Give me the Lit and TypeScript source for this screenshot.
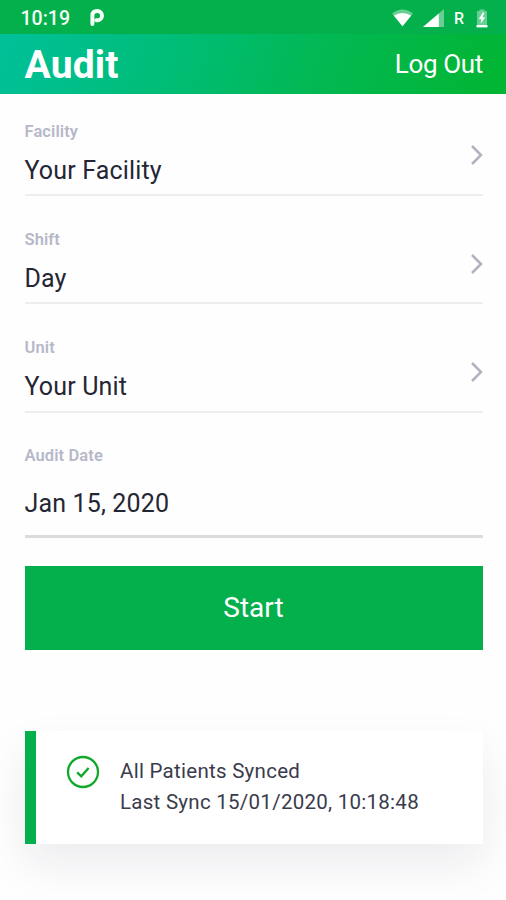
import { LitElement, html, css } from "lit";
import { customElement, property } from "lit/decorators.js";

@customElement("status-bar")
class StatusBar extends LitElement {
  static styles = css`
    :host { display: flex; align-items: center; height: 34px; box-sizing: border-box; padding: 2px 18px 0 20.5px; background: #03b04b; color: #f4fff6; }
    .time { font-size: 19.5px; font-weight: 500; width: 68.5px; line-height: 32px; padding-top: 2px; }
    .spacer { flex: 1; }
    .net { font-size: 16px; font-weight: 500; line-height: 32px; margin: 2px 12px 0 10px; }
    svg { display: block; }
    .signal { margin-left: 10px; }
  `;
  render() {
    return html`
      <span class="time">10:19</span>
      <svg width="17" height="20" viewBox="0 0 17 20" fill="none" stroke="#f4fff6" stroke-linecap="round">
        <path d="M3.4 16V7.6Q3.4 3.1 8 3.1H8.4A4.6 4.6 0 0 1 8.4 12.3H7.4" stroke-width="4" />
      </svg>
      <span class="spacer"></span>
      <svg width="21" height="18" viewBox="0 0 21 18">
        <path d="M0 4.5Q10.5-3.5 21 4.5L10.5 17.2Z" fill="#fff" opacity=".4" />
        <path d="M1.8 6.6Q10.5 1.6 19.2 6.6L10.5 17.2Z" fill="#fff" />
      </svg>
      <svg class="signal" width="21" height="18" viewBox="0 0 21 18">
        <path d="M21 0V18H0Z" fill="#fff" opacity=".4" />
        <path d="M15.8 4.5V18H0Z" fill="#fff" />
      </svg>
      <span class="net">R</span>
      <svg width="12" height="19" viewBox="0 0 12 19">
        <path d="M3.5 2V.5h5V2H11v14H1V2Z" fill="#fff" opacity=".4" />
        <path d="M6.8 3.5 2.8 10h2.6L4.6 14.8 9.2 8.2H6.5L8.5 3.5Z" fill="#fff" />
        <path d="M.5 16h11v2.4H.5Z" fill="#fff" />
      </svg>
    `;
  }
}

@customElement("form-field")
class FormField extends LitElement {
  @property() label = "";
  @property() value = "";
  @property({ type: Boolean }) picker = false;
  static styles = css`
    :host { display: flex; align-items: center; box-sizing: border-box; height: 75px; border-bottom: 2px solid #eeeef0; }
    :host(.date) { height: 92.5px; border-bottom: 3px solid #dcdcde; }
    .text { flex: 1; align-self: flex-start; }
    .label { font-size: 16.5px; line-height: 20px; font-weight: 600; color: #b6b8c9; letter-spacing: 0.1px; padding-top: 0.6px; }
    .value { margin-top: 14px; font-size: 25px; line-height: 30px; color: #252634; letter-spacing: 0.15px; }
    :host(.date) .value { margin-top: 22.6px; }
    svg { display: block; margin-bottom: 4.5px; }
  `;
  render() {
    return html`
      <div class="text">
        <div class="label">${this.label}</div>
        <div class="value">${this.value}</div>
      </div>
      ${this.picker
        ? html`<svg width="13" height="22" viewBox="0 0 13 22"><path d="M2 2 11 11 2 20" fill="none" stroke="#b0b2c1" stroke-width="2.5" /></svg>`
        : null}
    `;
  }
}

@customElement("app-root")
class AppRoot extends LitElement {
  static styles = css`
    :host { display: block; height: 900px; overflow: hidden; background: #fefefe; font-family: Roboto, "Liberation Sans", sans-serif; }
    .header { display: flex; align-items: center; justify-content: space-between; box-sizing: border-box; height: 60px; padding: 0 23px 0 24.5px; color: #fff; background: linear-gradient(110deg, #00c09a 0%, #00bc70 40%, #02b850 65%, #02b532 100%); }
    .title { font-size: 39px; font-weight: 700; line-height: 60px; padding-top: 2px; letter-spacing: 0.15px; }
    .logout { font-size: 26px; line-height: 60px; letter-spacing: -0.35px; }
    .form { display: flex; flex-direction: column; gap: 33.3px; padding: 27px 23.5px 0 24.5px; }
    .start { display: block; width: 458px; height: 84px; margin: 28px 0 0 24.5px; padding: 0; border: 0; background: #03b04b; color: #fff; font: 400 28px/84px Roboto, sans-serif; }
    .card { display: flex; box-sizing: border-box; height: 113px; margin: 81px 23.5px 0 24.5px; padding: 24px 0 0 30px; border-left: 11px solid #03b04b; background: #fff; box-shadow: 0 20px 45px rgba(30, 30, 60, 0.08); }
    .sync { margin: 1px 0 0 20.5px; font-size: 20.5px; line-height: 31px; color: #3a3b4c; letter-spacing: 0.27px; }
  `;
  render() {
    const fields = [
      ["Facility", "Your Facility"],
      ["Shift", "Day"],
      ["Unit", "Your Unit"],
    ];
    return html`
      <status-bar></status-bar>
      <div class="header">
        <span class="title">Audit</span>
        <span class="logout">Log Out</span>
      </div>
      <div class="form">
        ${fields.map(([label, value]) => html`<form-field .label=${label} .value=${value} .picker=${true}></form-field>`)}
        <form-field class="date" .label=${"Audit Date"} .value=${"Jan 15, 2020"}></form-field>
      </div>
      <button class="start">Start</button>
      <div class="card">
        <svg width="34" height="34" viewBox="0 0 34 34" fill="none" stroke="#12a82c">
          <circle cx="17" cy="17" r="15" stroke-width="2.3" />
          <path d="M11.2 17.3 15.3 21.3 22.6 13" stroke-width="2.4" />
        </svg>
        <div class="sync">
          <div>All Patients Synced</div>
          <div>Last Sync 15/01/2020, 10:18:48</div>
        </div>
      </div>
    `;
  }
}
